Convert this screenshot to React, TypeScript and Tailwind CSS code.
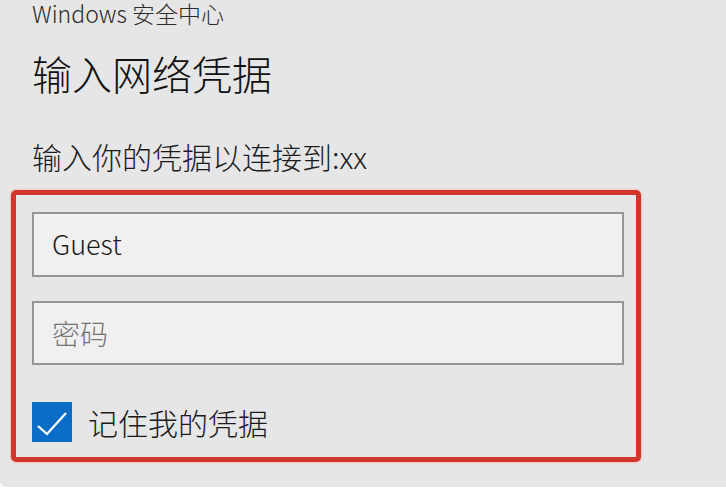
export default function App() {
    return (
        <div className="w-[726px] h-[501px] bg-white overflow-hidden" style={{ fontFamily: '"Noto Sans CJK SC", "Noto Sans", sans-serif' }}>
            <div className="h-[487px] bg-[#e6e6e6] rounded-bl-[6px] px-[11px] pt-[1px] flex flex-col">
                <div className="pl-[21px] text-[23px] leading-[24px] text-[#2b2b2b] font-light">Windows 安全中心</div>
                <h1 className="pl-[21px] mt-[28px] text-[40px] leading-[40px] text-[#111] font-light">输入网络凭据</h1>
                <p className="pl-[21px] mt-[48px] text-[30px] leading-[30px] text-[#1b1b1b] font-light">输入你的凭据以连接到:xx</p>

                <div className="mt-[19px] w-[630px] h-[272px] border-[5px] border-[#d2352c] rounded-[5px] shadow-[0_0_2px_1px_#f7c1b8] pt-[17px] pl-[16px] pr-[12px] flex flex-col">
                    <div className="h-[65px] border-2 border-[#959595] bg-[#f0f0f0] flex items-center pl-[18px] text-[27px] text-[#1a1a1a] font-light">
                        Guest
                    </div>
                    <div className="mt-[24px] h-[64px] border-2 border-[#959595] bg-[#f0f0f0] flex items-center pl-[18px] text-[28px] text-[#737373] font-light">
                        密码
                    </div>
                    <div className="mt-[37px] flex items-center gap-[16px]">
                        <div className="w-[40px] h-[40px] bg-[#0b6dc6]">
                            <svg viewBox="0 0 40 40" className="w-[40px] h-[40px]">
                                <path d="M6 24 L15 32 L34 11" fill="none" stroke="#fff" strokeWidth="2.2" />
                            </svg>
                        </div>
                        <span className="text-[30px] leading-[30px] text-[#1b1b1b] font-light">记住我的凭据</span>
                    </div>
                </div>
            </div>
        </div>
    )
}
